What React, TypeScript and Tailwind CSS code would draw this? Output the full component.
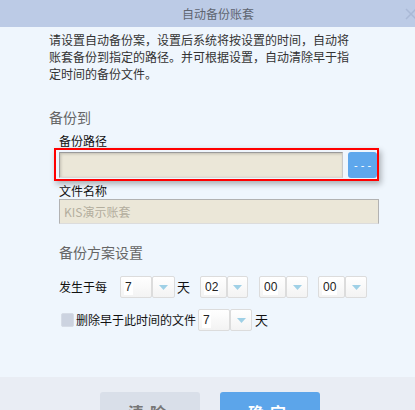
import React from "react";

const cjk = { fontFamily: '"Noto Sans CJK SC", "Liberation Sans", sans-serif' };

function Arrow() {
  return (
    <svg width="9" height="5" viewBox="0 0 9 5">
      <path d="M0 0 L9 0 L4.5 5 Z" fill="#9fd0e6" />
    </svg>
  );
}

function Select({ value, textW, arrowW }: { value: string; textW: string; arrowW: string }) {
  return (
    <div className="flex h-[22px]">
      <div
        className={`${textW} h-full border border-[#dcdcdc] rounded-[2px] bg-gradient-to-b from-[#ffffff] to-[#f3f3f3] flex items-center pl-[3px]`}
      >
        <span
          className="bg-white text-[12px] leading-[16px] text-[#222] px-[1px]"
          style={{ fontFamily: '"Liberation Sans", Arial, sans-serif' }}
        >
          {value}
        </span>
      </div>
      <div
        className={`${arrowW} h-full border border-[#dcdcdc] rounded-[2px] bg-gradient-to-b from-[#ffffff] to-[#f3f3f3] flex items-center justify-center`}
      >
        <Arrow />
      </div>
    </div>
  );
}

export default function App() {
  return (
    <div className="w-[415px] h-[410px] overflow-hidden flex flex-col bg-[#eff6fd]" style={cjk}>
      {/* title bar */}
      <div className="relative h-[27px] shrink-0 bg-[#bccbe6] flex items-center">
        <span className="ml-[182px] text-[12px] leading-[14px] text-[#5f6570]">自动备份账套</span>
        <svg className="absolute left-[405px] top-[8px]" width="12" height="12" viewBox="0 0 12 12">
          <path d="M1 1 L11 11 M11 1 L1 11" stroke="#aab9d6" strokeWidth="1.5" />
        </svg>
      </div>

      {/* body */}
      <div className="h-[350px] shrink-0 pl-[49px] pt-[4px]">
        <div className="text-[12px] leading-[17px] text-[#333]">
          <div className="whitespace-nowrap">请设置自动备份案，设置后系统将按设置的时间，自动将</div>
          <div className="whitespace-nowrap">账套备份到指定的路径。并可根据设置，自动清除早于指</div>
          <div className="whitespace-nowrap">定时间的备份文件。</div>
        </div>

        <div className="mt-[25px] text-[14px] leading-[20px] text-[#666]">备份到</div>

        <div className="pl-[10px]">
          <div className="mt-[7px] text-[12px] leading-[14px] text-[#111]">备份路径</div>
          <div className="ml-[-5px] w-[325px] h-[33px] border-2 border-[#ff0000] flex pl-[3px] pt-[2px] shadow-[2px_3px_6px_rgba(0,0,0,0.3)]">
            <div className="w-[285px] h-[26px] bg-[#ebe7d8] border border-t-[#9a9a9a] border-l-[#9a9a9a] border-r-[#c8c8c8] border-b-[#d8d8d8] shadow-[inset_1px_1px_3px_rgba(0,0,0,0.18)]" />
            <div
              className="ml-[5px] w-[29px] h-[26px] rounded-[3px] bg-[#5ea7ec] flex items-center justify-center text-white text-[11px] leading-[12px] whitespace-nowrap"
              style={{ fontFamily: '"Liberation Sans", Arial, sans-serif' }}
            >
              - - -
            </div>
          </div>

          <div className="mt-[2px] text-[12px] leading-[16px] text-[#111]">文件名称</div>
          <div className="w-[320px] h-[25px] bg-[#ebe7d8] border border-[#b2b2b2] border-b-[#dcdcdc] flex items-center pl-[4px] text-[12px] text-[#b3ae9e]">
            KIS演示账套
          </div>

          <div className="mt-[18px] text-[14px] leading-[20px] text-[#666]">备份方案设置</div>

          <div className="mt-[14px] flex items-center text-[12px] text-[#111]">
            <span className="w-[61px]">发生于每</span>
            <Select value="7" textW="w-[32px]" arrowW="w-[23px]" />
            <span className="ml-[2px] w-[23px] text-[13px]">天</span>
            <Select value="02" textW="w-[27px]" arrowW="w-[21px]" />
            <div className="ml-[11px]">
              <Select value="00" textW="w-[27px]" arrowW="w-[22px]" />
            </div>
            <div className="ml-[10px]">
              <Select value="00" textW="w-[27px]" arrowW="w-[22px]" />
            </div>
          </div>

          <div className="mt-[11px] flex items-center text-[12px] text-[#111]">
            <div className="ml-[2px] w-[13px] h-[14px] rounded-[2px] bg-[#ccd3e0] border border-[#d6dce6]" />
            <span className="ml-[2px] w-[122px]">删除早于此时间的文件</span>
            <Select value="7" textW="w-[32px]" arrowW="w-[22px]" />
            <span className="ml-[3px] text-[13px]">天</span>
          </div>
        </div>
      </div>

      {/* footer */}
      <div className="flex-1 bg-[#e9edf4] flex pl-[100px] pt-[15px] gap-[20px]">
        <div className="w-[100px] h-[40px] shrink-0 rounded-[3px] bg-[#d9dfe9] flex items-center justify-center text-[16px] font-bold text-[#777] tracking-[6px]">
          清除
        </div>
        <div className="w-[100px] h-[40px] shrink-0 rounded-[3px] bg-[#5ca5ea] flex items-center justify-center text-[16px] font-bold text-white tracking-[6px]">
          确定
        </div>
      </div>
    </div>
  );
}
